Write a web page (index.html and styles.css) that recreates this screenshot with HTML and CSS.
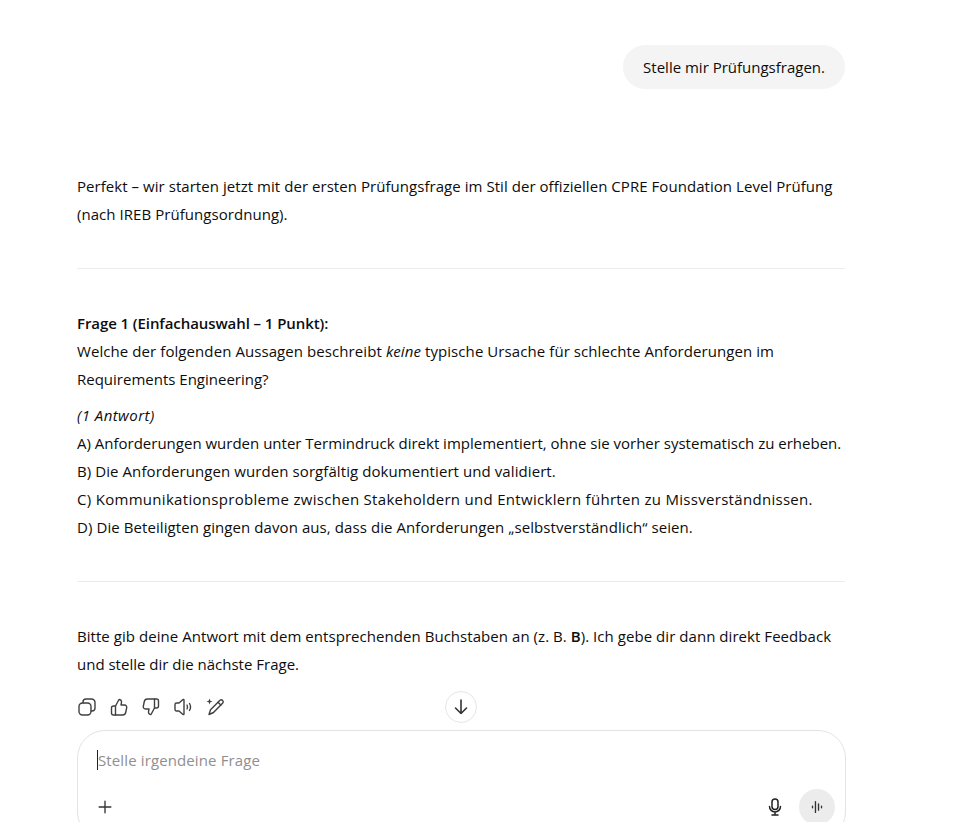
FILE: index.html
```html
<!DOCTYPE html>
<html lang="de">
<head>
  <meta charset="UTF-8">
  <title>Prüfungsfragen</title>
  <link rel="stylesheet" href="styles.css">
</head>
<body>
  <main class="thread">
    <div class="user-row">
      <div class="bubble">Stelle mir Prüfungsfragen.</div>
    </div>

    <p class="intro track-s">Perfekt – wir starten jetzt mit der ersten Prüfungsfrage im Stil der offiziellen CPRE Foundation Level Prüfung (nach IREB Prüfungsordnung).</p>
    <hr class="rule">

    <p>
      <strong class="line track-neg">Frage 1 (Einfachauswahl – 1 Punkt):</strong>
      <span class="line track-m">Welche der folgenden Aussagen beschreibt <em>keine</em> typische Ursache für schlechte Anforderungen im</span>
      <span class="line">Requirements Engineering?</span>
    </p>
    <p class="options">
      <em class="line antwort">(1 Antwort)</em>
      <span class="line">A) Anforderungen wurden unter Termindruck direkt implementiert, ohne sie vorher systematisch zu erheben.</span>
      <span class="line track-m">B) Die Anforderungen wurden sorgfältig dokumentiert und validiert.</span>
      <span class="line track-l">C) Kommunikationsprobleme zwischen Stakeholdern und Entwicklern führten zu Missverständnissen.</span>
      <span class="line track-m">D) Die Beteiligten gingen davon aus, dass die Anforderungen „selbstverständlich“ seien.</span>
    </p>
    <hr class="rule">

    <p>
      <span class="line track-s">Bitte gib deine Antwort mit dem entsprechenden Buchstaben an (z. B. <strong>B</strong>). Ich gebe dir dann direkt Feedback</span>
      <span class="line">und stelle dir die nächste Frage.</span>
    </p>

    <div class="actions">
      <svg class="icon" viewBox="0 0 20 20"><rect x="2" y="6" width="12" height="12" rx="3.5"/><path d="M6 6V5a3 3 0 0 1 3-3h5.500a3.500 3.500 0 0 1 3.500 3.500V11a3 3 0 0 1-3 3h-1"/></svg>
      <svg class="icon" viewBox="0 0 20 20"><path d="M6.500 9 10 2.500c1.700 0 2.700 1.200 2.500 2.800L12 8h3.500c1.500 0 2.500 1.300 2.200 2.700l-1 4.800c-.3 1.400-1.400 2.500-3 2.500H6.500z"/><path d="M6.500 9H4.500A2 2 0 0 0 2.500 11v5a2 2 0 0 0 2 2h2"/></svg>
      <svg class="icon" viewBox="0 0 20 20"><path d="M13.500 11 10 17.500c-1.700 0-2.700-1.200-2.500-2.800L8 12H4.500c-1.500 0-2.500-1.300-2.200-2.700l1-4.800C3.600 3.100 4.700 2 6.300 2h7.200z"/><path d="M13.500 11h2a2 2 0 0 0 2-2V4a2 2 0 0 0-2-2h-2"/></svg>
      <svg class="icon" viewBox="0 0 20 20"><path d="M2 7.500v5a1.500 1.500 0 0 0 1.500 1.500H6l4 3.500c.4.300 1 0 1-.5V3c0-.5-.6-.8-1-.5L6 6H3.500A1.500 1.500 0 0 0 2 7.500z"/><path d="M14 8c.7 1.200.7 2.800 0 4M16.500 6.500c1.200 2 1.200 5 0 7"/></svg>
      <svg class="icon" viewBox="0 0 20 20"><path d="M15 3.200a2 2 0 0 1 2.800 2.800L8.500 15.500 4 17.500l1.500-4.800z"/><path d="M13 5.200 15.800 8"/><path class="spark" d="M4.500 1.500 5.300 3.700 7.500 4.500 5.300 5.300 4.500 7.500 3.700 5.300 1.500 4.500 3.700 3.700z"/></svg>
    </div>
  </main>

  <button class="scroll-down" aria-label="Nach unten">
    <svg viewBox="0 0 20 20"><path d="M10 3v13.500M4.500 11 10 16.500 15.500 11"/></svg>
  </button>

  <form class="composer">
    <div class="prompt"><span class="caret"></span>Stelle irgendeine Frage</div>
    <div class="tools">
      <svg class="plus" viewBox="0 0 20 20"><path d="M10 3.500v13M3.500 10h13"/></svg>
      <div class="tools-right">
        <svg class="mic" viewBox="0 0 20 20"><rect x="7" y="2" width="6" height="10.500" rx="3"/><path d="M4.500 9.500a5.500 5.500 0 0 0 11 0M10 15v3M7 18h6"/></svg>
        <span class="voice">
          <svg viewBox="0 0 20 20"><path d="M8.300 4v12M11.700 6.500v7M5 9.200v1.600M15 9.200v1.600"/></svg>
        </span>
      </div>
    </div>
  </form>
</body>
</html>
```

FILE: styles.css
```css
html, body { height: 100%; margin: 0; }
body {
  position: relative;
  height: 822px;
  overflow: hidden;
  background: #fff;
  color: #0d0d0d;
  font-family: "Open Sans", "Noto Sans", sans-serif;
  font-size: 15px;
  line-height: 28px;
}
.thread {
  width: 768px;
  margin-left: 77px;
  padding-top: 45px;
}
.user-row { display: flex; justify-content: flex-end; }
.bubble {
  padding: 8px 20px;
  background: #f4f4f4;
  border-radius: 22px;
}
p { margin: 0 0 8px; }
.intro { margin-top: 83px; }
.options { margin-bottom: 0; }
.line { display: block; white-space: nowrap; }
.track-neg { letter-spacing: -.08px; }
.track-s { letter-spacing: .05px; }
.track-m { letter-spacing: .08px; }
.track-l { letter-spacing: .3px; }
.antwort { letter-spacing: .45px; }
.rule {
  height: 1px;
  margin: 40px 0;
  border: 0;
  background: #ececec;
}
strong { font-weight: 600; }

.actions {
  display: flex;
  gap: 12px;
  align-items: center;
  height: 20px;
  margin-top: 19px;
}
.icon { width: 20px; height: 20px; flex: none; }
svg { fill: none; stroke: #404040; stroke-width: 1.400; stroke-linecap: round; stroke-linejoin: round; }
.spark { fill: #404040; stroke: none; }

.scroll-down {
  position: absolute;
  left: 445px;
  top: 691px;
  display: flex;
  align-items: center;
  justify-content: center;
  width: 32px;
  height: 32px;
  padding: 0;
  background: #fff;
  border: 1px solid #e6e6e6;
  border-radius: 50%;
}
.scroll-down svg { width: 20px; height: 20px; stroke: #333; stroke-width: 1.600; }

.composer {
  position: absolute;
  left: 77px;
  top: 730px;
  box-sizing: border-box;
  width: 769px;
  height: 110px;
  padding: 15px 10px 0 19px;
  border: 1px solid #e3e3e3;
  border-radius: 28px;
}
.prompt {
  display: flex;
  align-items: center;
  height: 28px;
  color: #8f8f8f;
  letter-spacing: .12px;
}
.caret {
  width: 1px;
  height: 20px;
  background: #222;
}
.tools {
  display: flex;
  justify-content: space-between;
  align-items: center;
  margin-top: 15px;
}
.plus { width: 18px; height: 18px; margin-left: -1px; stroke: #333; stroke-width: 1.500; }
.tools-right { display: flex; align-items: center; gap: 14px; }
.mic { width: 20px; height: 20px; stroke: #222; stroke-width: 1.500; }
.voice {
  display: flex;
  align-items: center;
  justify-content: center;
  width: 36px;
  height: 36px;
  background: #ececec;
  border-radius: 50%;
}
.voice svg { width: 18px; height: 18px; stroke: #333; stroke-width: 1.500; }
```
